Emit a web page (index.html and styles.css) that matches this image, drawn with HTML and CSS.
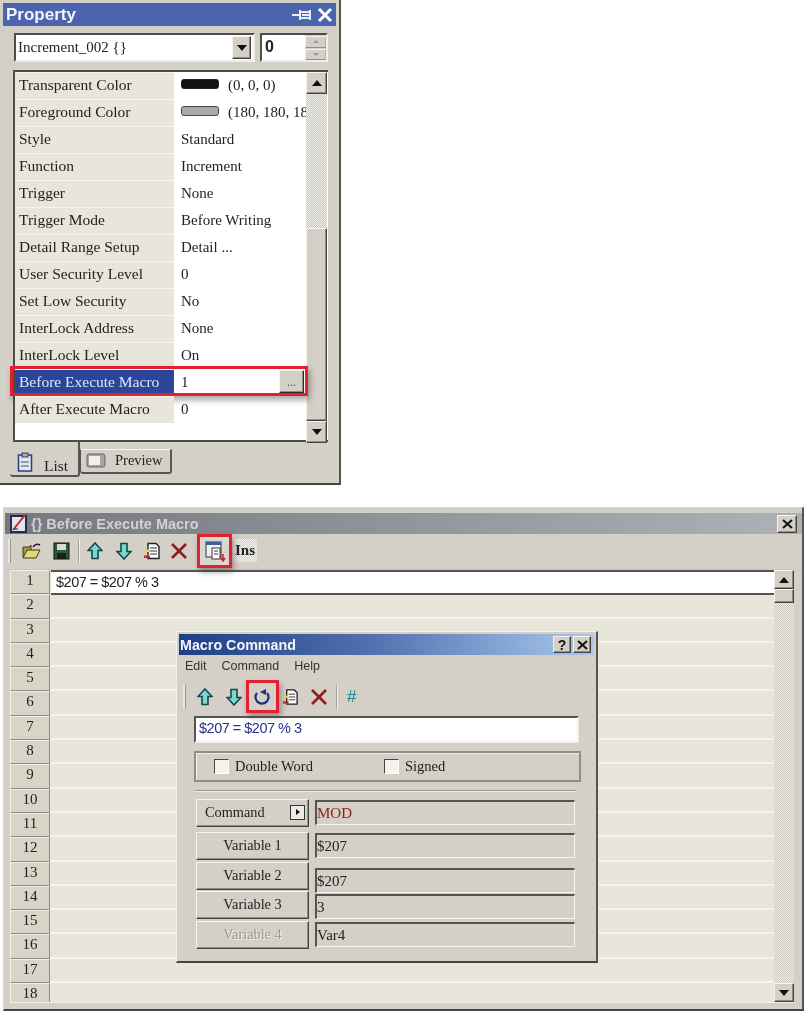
FILE: index.html
```html
<!DOCTYPE html>
<html lang="en">
<head>
<meta charset="utf-8">
<title>Macro</title>
<link rel="stylesheet" href="styles.css">
</head>
<body>
<svg class="defs" width="0" height="0" aria-hidden="true">
  <symbol id="up" viewBox="0 0 16 18"><path d="M8 1 15 8.500H11V16.500H5V8.500H1Z" fill="#7fd6d0" stroke="#12484c" stroke-width="1.600"/></symbol>
  <symbol id="down" viewBox="0 0 16 18"><path d="M8 17 15 9.500H11V1.500H5V9.500H1Z" fill="#7fd6d0" stroke="#12484c" stroke-width="1.600"/></symbol>
  <symbol id="doc" viewBox="0 0 18 18"><path d="M5 1.500H13L16 4.500V16.500H5Z" fill="#fff" stroke="#222" stroke-width="1.400"/><path d="M7 6H14M7 9H14M7 12H14" stroke="#333"/><path d="M1 7.500H7V10H1Z" fill="#f4d93a"/><path d="M1 13.500H7V16H1Z" fill="#d3242a"/></symbol>
  <symbol id="cross" viewBox="0 0 18 18"><path d="M2 2 16 16M16 2 2 16" stroke="#8f1d1d" stroke-width="2.600"/></symbol>
</svg>

<section class="prop">
  <header class="prop-title"><span>Property</span>
    <svg class="pin" width="24" height="16" viewBox="0 0 24 16"><path d="M1 8H9M9 3V13M9 5H19V11H9M11 8H19M19 3V13" fill="none" stroke="#e8edf7" stroke-width="2"/></svg>
    <svg width="16" height="16" viewBox="0 0 16 16"><path d="M2 2 14 14M14 2 2 14" stroke="#fff" stroke-width="3"/></svg>
  </header>
  <div class="prop-top">
    <div class="combo"><span class="combo-text">Increment_002 {}</span><span class="btn drop"><i class="tri-d"></i></span></div>
    <div class="spin"><b>0</b><span class="spin-btns"><span class="btn"><i class="tiny-u"></i></span><span class="btn"><i class="tiny-d"></i></span></span></div>
  </div>
  <div class="list">
    <div class="rows">
      <div class="row"><span class="k">Transparent Color</span><span class="v"><i class="swatch black"></i>(0, 0, 0)</span></div>
      <div class="row"><span class="k">Foreground Color</span><span class="v"><i class="swatch gray"></i>(180, 180, 180)</span></div>
      <div class="row"><span class="k">Style</span><span class="v">Standard</span></div>
      <div class="row"><span class="k">Function</span><span class="v">Increment</span></div>
      <div class="row"><span class="k">Trigger</span><span class="v">None</span></div>
      <div class="row"><span class="k">Trigger Mode</span><span class="v">Before Writing</span></div>
      <div class="row"><span class="k">Detail Range Setup</span><span class="v">Detail ...</span></div>
      <div class="row"><span class="k">User Security Level</span><span class="v">0</span></div>
      <div class="row"><span class="k">Set Low Security</span><span class="v">No</span></div>
      <div class="row"><span class="k">InterLock Address</span><span class="v">None</span></div>
      <div class="row"><span class="k">InterLock Level</span><span class="v">On</span></div>
      <div class="row sel"><span class="k">Before Execute Macro</span><span class="v">1<span class="btn dots">...</span></span><span class="hl hl-row"></span></div>
      <div class="row"><span class="k">After Execute Macro</span><span class="v">0</span></div>
    </div>
    <div class="sb">
      <span class="btn sb-b"><i class="tri-u"></i></span>
      <span class="sb-track sb-t1"></span>
      <span class="btn sb-thumb"></span>
      <span class="btn sb-b"><i class="tri-d"></i></span>
    </div>
  </div>
  <div class="tabs">
    <div class="tab on">
      <svg width="16" height="20" viewBox="0 0 16 20"><rect x="1.500" y="3" width="13" height="16" fill="#dfe8f6" stroke="#23407f" stroke-width="1.500"/><rect x="5" y="1" width="6" height="4" fill="#c9a86a" stroke="#23407f"/><path d="M4 10H12M4 14H12" stroke="#555"/></svg>
      <span>List</span></div>
    <div class="tab">
      <svg width="20" height="15" viewBox="0 0 20 15"><rect x="1" y="1" width="18" height="13" rx="2" fill="#a7a7a2" stroke="#666"/><rect x="3" y="3" width="11" height="9" fill="#f1f1ee"/></svg>
      <span>Preview</span></div>
  </div>
</section>

<section class="win">
  <header class="win-title">
    <svg class="win-ico" width="17" height="19" viewBox="0 0 17 19"><rect x="1" y="2" width="15" height="16" fill="#e6e6ea" stroke="#1d2a5a" stroke-width="2"/><path d="M3 16 15 1" stroke="#c8232c" stroke-width="2"/><path d="M4 15H8" stroke="#222"/></svg>
    <span>{} Before Execute Macro</span>
    <span class="btn win-x"><svg width="11" height="10" viewBox="0 0 11 10"><path d="M1 1 10 9M10 1 1 9" stroke="#111" stroke-width="2"/></svg></span>
  </header>
  <div class="win-tools">
    <i class="grip"></i>
    <svg class="t" width="20" height="18" viewBox="0 0 20 18"><path d="M1 5H7L9 3V15H1Z" fill="#a99d45" stroke="#3a3a12"/><path d="M1 16 5 8H18L14 16Z" fill="#e3d877" stroke="#3a3a12"/><path d="M11 5Q14 1 18 3" fill="none" stroke="#222" stroke-width="1.500"/></svg>
    <svg class="t" width="17" height="18" viewBox="0 0 17 18"><rect x="1" y="1" width="15" height="16" fill="#2f5a35" stroke="#111"/><rect x="4" y="2" width="9" height="6" fill="#d5dbd2"/><rect x="4" y="11" width="9" height="6" fill="#1c1c1c"/></svg>
    <i class="sep"></i>
    <svg class="t" width="16" height="18"><use href="#up"/></svg>
    <svg class="t t-down" width="16" height="18"><use href="#down"/></svg>
    <svg class="t" width="18" height="18"><use href="#doc"/></svg>
    <svg class="t t-cross" width="18" height="18"><use href="#cross"/></svg>
    <span class="tool-on">
      <svg width="22" height="22" viewBox="0 0 22 22"><rect x="2" y="2" width="15" height="15" fill="#f2f2ef" stroke="#333"/><rect x="2" y="2" width="15" height="3" fill="#3f5f9f"/><rect x="8" y="8" width="8" height="11" fill="#fff" stroke="#333"/><path d="M10 11H14M10 14H14" stroke="#333"/><path d="M19 14V20M17 18 19 21 21 18" stroke="#c8232c" stroke-width="1.500" fill="none"/></svg>
      <span class="hl hl-tool"></span>
    </span>
    <b class="ins">Ins</b>
  </div>
  <div class="grid">
    <div class="heads">
      <span>1</span><span>2</span><span>3</span><span>4</span><span>5</span><span>6</span><span>7</span><span>8</span><span>9</span><span>10</span><span>11</span><span>12</span><span>13</span><span>14</span><span>15</span><span>16</span><span>17</span><span>18</span>
    </div>
    <div class="cells">
      <div class="first">$207 = $207 % 3</div>
    </div>
    <div class="sb wsb">
      <span class="btn sb-b"><i class="tri-u"></i></span>
      <span class="btn wsb-thumb"></span>
      <span class="sb-track sb-t1"></span>
      <span class="btn sb-b"><i class="tri-d"></i></span>
    </div>
  </div>

  <div class="dlg">
    <header class="dlg-title"><span>Macro Command</span>
      <span class="btn dlg-b">?</span>
      <span class="btn dlg-b"><svg width="11" height="10" viewBox="0 0 11 10"><path d="M1 1 10 9M10 1 1 9" stroke="#111" stroke-width="2"/></svg></span>
    </header>
    <nav class="menu"><span>Edit</span><span>Command</span><span>Help</span></nav>
    <div class="dlg-tools">
      <i class="grip"></i>
      <svg class="t" width="16" height="18"><use href="#up"/></svg>
      <svg class="t t-down" width="16" height="18"><use href="#down"/></svg>
      <span class="tool-undo">
        <svg width="18" height="18" viewBox="0 0 18 18"><path d="M4 5A6.500 6.500 0 1 0 14 5" fill="none" stroke="#1f2f7a" stroke-width="2.200"/><path d="M13 1V7L7 4Z" fill="#1f2f7a"/></svg>
        <span class="hl hl-undo"></span>
      </span>
      <svg class="t" width="17" height="18"><use href="#doc"/></svg>
      <svg class="t" width="18" height="18"><use href="#cross"/></svg>
      <i class="sep"></i>
      <span class="hash">#</span>
    </div>
    <div class="expr">$207 = $207 % 3</div>
    <div class="opts">
      <label class="opt first-opt"><i class="chk"></i>Double Word</label>
      <label class="opt"><i class="chk"></i>Signed</label>
    </div>
    <hr class="rule">
    <div class="form">
      <div class="form-btns">
        <span class="btn fb cmd"><span>Command</span><i class="arrow-box"></i></span>
        <span class="btn fb b1">Variable 1</span>
        <span class="btn fb b2">Variable 2</span>
        <span class="btn fb b3">Variable 3</span>
        <span class="btn fb b4 dis">Variable 4</span>
      </div>
      <div class="form-fields">
        <div class="fld red">MOD</div>
        <div class="fld f1">$207</div>
        <div class="fld f2">$207</div>
        <div class="fld f3">3</div>
        <div class="fld f4">Var4</div>
      </div>
    </div>
  </div>
</section>
</body>
</html>
```

FILE: styles.css
```css
* { box-sizing: border-box; }
html, body { margin: 0; height: 1013px; overflow: hidden; background: #fff; }
body { font-family: "Liberation Serif", serif; font-size: 15px; color: #222; filter: blur(0.45px); }
.defs { position: absolute; }
i { display: block; font-style: normal; }

.btn { display: flex; align-items: center; justify-content: center; background: #d4d0c8; border: 1px solid; border-color: #f4f3ee #44433f #44433f #f4f3ee; box-shadow: inset -1px -1px 0 #8f8d86; }
.tri-d, .tri-u { width: 0; height: 0; border-left: 5px solid transparent; border-right: 5px solid transparent; }
.tri-d { border-top: 6px solid #111; }
.tri-u { border-bottom: 6px solid #111; }
.tiny-u, .tiny-d { width: 0; height: 0; border-left: 3px solid transparent; border-right: 3px solid transparent; }
.tiny-u { border-bottom: 3px solid #999; }
.tiny-d { border-top: 3px solid #999; }

.hl { position: absolute; border: 3px solid #e2202f; box-shadow: 2px 4px 6px rgba(60,60,60,.45); pointer-events: none; }

/* Property panel */
.prop { width: 341px; height: 485px; padding: 3px 3px 0; background: #d4d0c8; border-right: 2px solid #55544f; border-bottom: 2px solid #45443f; }
.prop-title { height: 23px; background: #4a65ae; color: #f2f4fa; display: flex; align-items: center; gap: 2px; padding: 0 3px; font: bold 17px "Liberation Sans", sans-serif; }
.prop-title span { flex: 1; }
.prop-top { display: flex; gap: 5px; margin: 7px 0 0 11px; height: 29px; }
.combo { width: 241px; background: #fff; border: 2px solid; border-color: #4d4c47 #eee #eee #4d4c47; display: flex; align-items: center; justify-content: space-between; padding: 0 2px 0 2px; }
.combo-text { font-size: 15px; }
.drop { width: 19px; height: 23px; }
.spin { width: 68px; background: #fff; border: 2px solid; border-color: #4d4c47 #eee #eee #4d4c47; display: flex; justify-content: space-between; padding-left: 3px; }
.spin b { font: bold 16px/24px "Liberation Sans", sans-serif; }
.spin-btns { width: 21px; background: #d4d0c8; display: flex; flex-direction: column; gap: 1px; padding-top: 1px; }
.spin-btns .btn { height: 12px; border-color: #f4f3ee #b2afa8 #8f8d86 #f4f3ee; box-shadow: none; }

.list { margin: 8px 0 0 10px; width: 315px; height: 372px; border: solid #4d4c47; border-width: 2px 0 2px 2px; background: #fff; display: flex; position: relative; }
.rows { width: 291px; }
.row { position: relative; display: flex; height: 27px; align-items: center; }
.k { width: 159px; height: 27px; flex: none; background: #e8e6da; border-top: 1px solid #f6f5ef; padding-left: 4px; line-height: 24px; font-size: 15.500px; white-space: nowrap; }
.v { flex: 1; min-width: 0; height: 27px; padding: 0 0 1px 7px; display: flex; align-items: center; white-space: nowrap; overflow: hidden; position: relative; font-size: 15px; line-height: 22px; }
.swatch { width: 38px; height: 10px; border-radius: 3px; margin: 0 9px 2px 0; border: 1px solid #222; flex: none; }
.black { background: #111; }
.gray { background: #aaa; border-color: #444; }
.sel .k { background: #2b4699; color: #dfe6f7; }
.dots { position: absolute; right: 2px; top: 1px; width: 25px; height: 23px; font-size: 12px; color: #555; border-color: #f4f3ee #2c2b28 #2c2b28 #f4f3ee; }
.hl-row { left: -5px; top: -3px; width: 298px; height: 30px; }
.sb { width: 21px; flex: none; display: flex; flex-direction: column; }
.sb-b { height: 22px; flex: none; }
.sb-track { flex: 1; background-color: #e6e5e0; background-image: repeating-conic-gradient(#c6c5be 0 25%, #f2f1ec 0 50%); background-size: 2px 2px; }
.sb-thumb { height: 193px; flex: none; }
.list .sb-t1 { flex: none; height: 134px; }

.tabs { display: flex; margin: 0 0 0 7px; align-items: flex-start; }
.tab { width: 92px; height: 25px; margin-top: 7px; background: #d4d0c8; display: flex; align-items: center; gap: 9px; padding: 0 0 1px 5px; border: 1px solid #555; border-top-color: #f5f4ef; border-width: 1px 2px 2px 1px; border-radius: 0 0 3px 3px; font-size: 14.500px; }
.tab.on { width: 70px; height: 35px; margin-top: 0; padding: 6px 0 0 7px; border-left: 0; border-top: 0; gap: 11px; font-size: 15.500px; }
.tab.on span { margin-top: 8px; }

/* Macro editor window */
.win { position: absolute; left: 3px; top: 507px; width: 801px; height: 504px; background: #d4d0c8; border: 1px solid #d8d6ce; border-right: 2px solid #55544f; border-bottom: 2px solid #45443f; }
.win-title { height: 21px; margin: 5px 0 0 1px; background: linear-gradient(90deg, #75797f, #aeb1b8); color: #cfd1d6; display: flex; align-items: center; font: bold 14.500px "Liberation Sans", sans-serif; padding-left: 5px; gap: 4px; }
.win-title > span:nth-child(2) { flex: 1; }
.win-x { width: 20px; height: 18px; margin-right: 5px; }
.win-tools { height: 36px; display: flex; align-items: center; padding: 0 0 2px 4px; gap: 11px; border-bottom: 1px solid #c8c5bc; }
.grip { width: 3px; height: 24px; background: #e8e6e0; border-right: 1px solid #9a9890; }
.sep { width: 2px; height: 24px; background: #f0efe9; border-left: 1px solid #a4a29a; }
.win-tools .t { flex: none; }
.win-tools .sep { margin: 0 -4px 0 -3px; }
.win-tools .t-down { margin-left: 2px; }
.win-tools .t-cross { margin-left: -2px; }
.tool-on { position: relative; width: 30px; height: 30px; margin-left: 1px; display: flex; align-items: center; justify-content: center; background-color: #d9d7ce; }
.hl-tool { left: -3px; top: -2px; width: 35px; height: 34px; }
.ins { font: bold 15px "Liberation Serif", serif; margin-left: -8px; padding: 3px 2px; background-image: repeating-conic-gradient(#d4d2ca 0 25%, #f2f1ec 0 50%); background-size: 2px 2px; color: #222; }

.grid { display: flex; margin: 0 8px 0 6px; height: 433px; overflow: hidden; background: #e8e6da; border-bottom: 1px solid #f2f0e8; }
.heads { width: 40px; flex: none; display: flex; flex-direction: column; }
.heads span { height: 24.300px; flex: none; background: #d8d5c8; border: 1px solid; border-color: #f0eee6 #8c8a82 #8c8a82 #f0eee6; text-align: center; line-height: 18px; font-size: 15px; }
.cells { flex: 1; background-color: #e8e6da; background-image: repeating-linear-gradient(180deg, transparent 0 22.300px, #f5f4ec 22.300px 24.300px); }
.first { height: 25px; margin-left: 1px; background: #fff; border: solid #55544f; border-width: 2px 0; padding-left: 5px; font: 14.500px/20px "Liberation Sans", sans-serif; color: #222; letter-spacing: -.5px; }
.wsb { width: 20px; background: #e6e5e0; }
.wsb .sb-b { height: 19px; }
.wsb-thumb { height: 14px; flex: none; }

/* Macro Command dialog */
.dlg { position: absolute; left: 172px; top: 123px; width: 422px; height: 332px; background: #d4d0c8; border: 1px solid #f2f1ea; border-right: 2px solid #55544f; border-bottom: 2px solid #45443f; padding: 2px 2px 0; }
.dlg-title { height: 21px; background: linear-gradient(90deg, #1e3f86, #4f6fae 45%, #a9c9ee); color: #f4f6fb; display: flex; align-items: center; padding: 0 3px 0 1px; gap: 2px; font: bold 14.300px "Liberation Sans", sans-serif; }
.dlg-title span:first-child { flex: 1; }
.dlg-b { width: 18px; height: 17px; font-size: 14px; font-family: "Liberation Sans", sans-serif; color: #111; }
.menu { display: flex; gap: 15px; padding: 4px 0 0 6px; height: 27px; font: 12.500px "Liberation Sans", sans-serif; color: #333; }
.dlg-tools { display: flex; align-items: center; gap: 11px; height: 29px; padding-left: 4px; }
.dlg-tools .t-down { margin-left: 2px; }
.dlg-tools .sep { margin-left: -3px; }
.tool-undo { position: relative; width: 18px; height: 18px; }
.hl-undo { left: -7px; top: -8px; width: 33px; height: 33px; }
.hash { color: #1b8a94; font: 17px "Liberation Sans", sans-serif; margin-left: -2px; }
.expr { margin: 5px 0 0 15px; width: 385px; height: 27px; background: #fff; border: 2px solid; border-color: #55544f #f0efe9 #f0efe9 #55544f; color: #2b2f86; font: 14.500px/21px "Liberation Sans", sans-serif; padding-left: 3px; letter-spacing: -.5px; }
.opts { margin: 8px 0 0 15px; width: 387px; height: 31px; border: 2px solid #8f8d86; display: flex; align-items: center; padding-left: 18px; box-shadow: inset 1px 1px 0 #f0efe9; }
.opt { display: flex; align-items: center; gap: 6px; font-size: 14.500px; }
.first-opt { width: 170px; }
.chk { width: 15px; height: 15px; background: #f4f3ee; border: 1px solid; border-color: #44433f #fff #fff #44433f; }
.rule { margin: 8px 0 0 15px; width: 382px; height: 2px; border: 0; background: #9b9990; border-bottom: 1px solid #eeede6; }
.form { display: flex; gap: 6px; margin: 7px 0 0 17px; }
.form-btns, .form-fields { display: flex; flex-direction: column; }
.form-fields { padding-top: 1px; }
.fb { width: 113px; height: 28px; font-size: 14.300px; padding-bottom: 2px; }
.cmd { justify-content: flex-start; padding-left: 8px; position: relative; }
.arrow-box { position: absolute; right: 3px; top: 5px; width: 15px; height: 15px; background: #ecebe5; border: 1px solid #333; }
.arrow-box::after { content: ""; position: absolute; left: 5px; top: 3px; border-left: 4px solid #111; border-top: 3px solid transparent; border-bottom: 3px solid transparent; }
.b1 { margin-top: 5px; }
.b2 { margin-top: 2px; }
.b3 { margin-top: 1px; }
.b4 { margin-top: 2px; }
.dis { color: #9c9a93; text-shadow: 1px 1px 0 #f2f1ea; }
.fld { width: 260px; height: 25px; background: #d4d0c8; border: solid; border-color: #55544f #f6f5f0 #f6f5f0 #55544f; border-width: 2px 1px 1px 2px; line-height: 22px; font-size: 15px; }
.red { color: #8f1d1d; }
.f1 { margin-top: 8px; }
.f2 { margin-top: 10px; }
.f3 { margin-top: 1px; }
.f4 { margin-top: 3px; }
```
